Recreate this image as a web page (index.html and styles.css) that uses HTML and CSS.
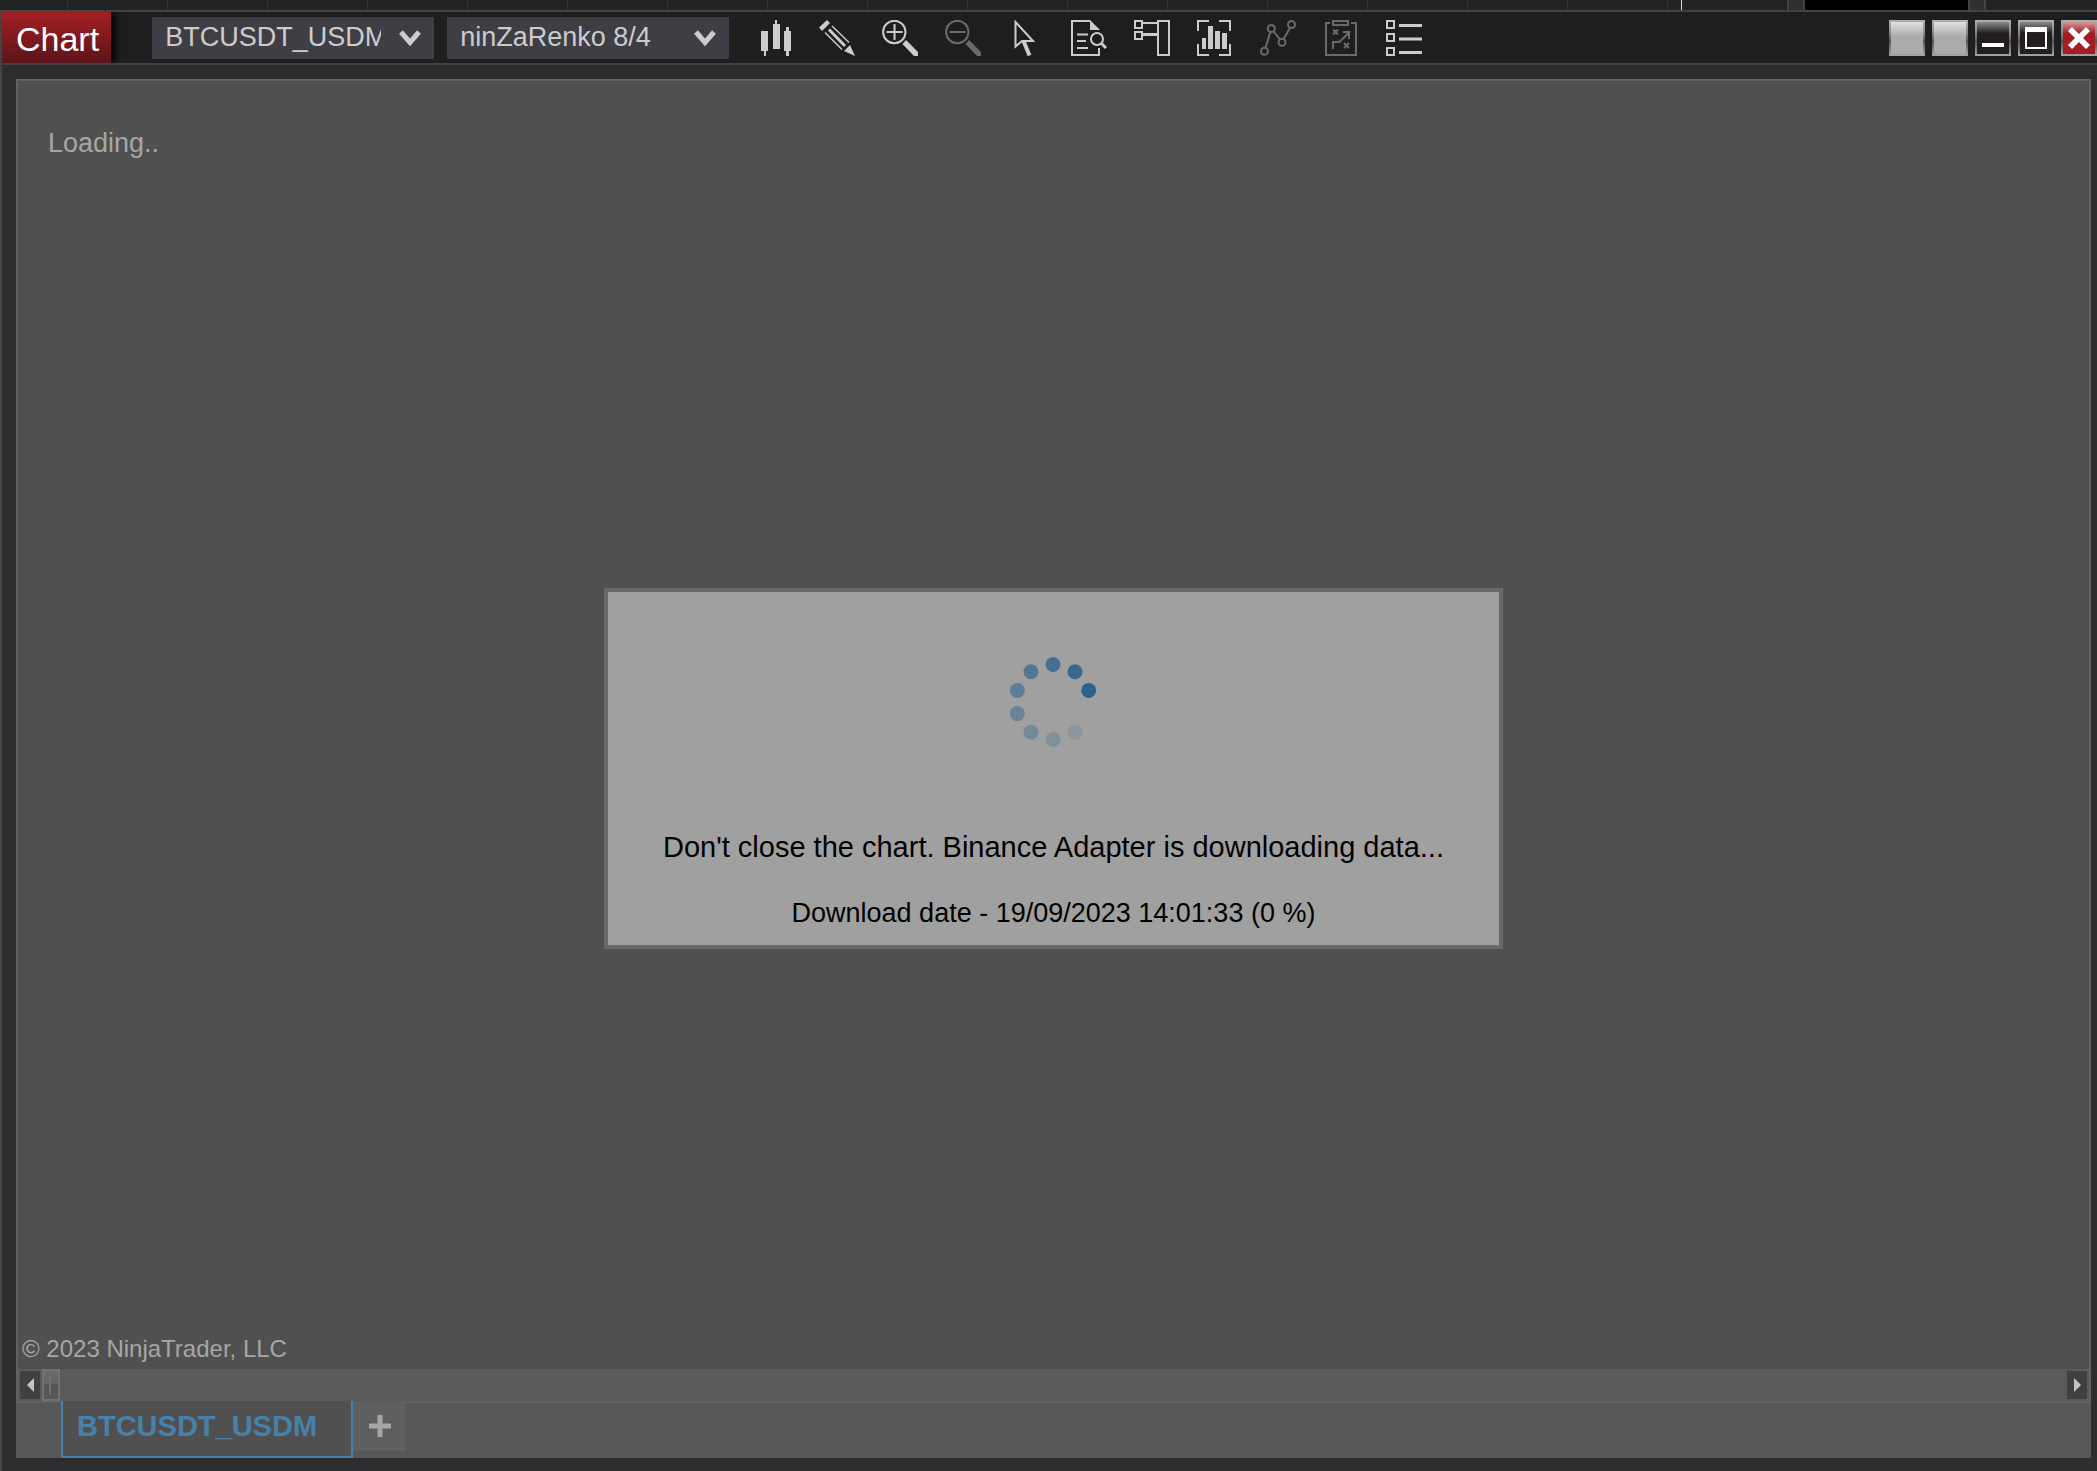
FILE: index.html
```html
<!DOCTYPE html>
<html lang="en">
<head>
    <meta charset="UTF-8">
    <meta name="viewport" content="width=device-width, initial-scale=1.0">
    <title>Chart</title>
    <link rel="stylesheet" href="styles.css">
</head>
<body>
    <!-- windows behind the chart -->
    <div class="backdrop">
        <div class="backdrop-grid"></div>
        <div class="backdrop-price"></div>
        <div class="backdrop-split"></div>
        <div class="backdrop-black"></div>
        <div class="backdrop-split"></div>
        <div class="backdrop-end"></div>
    </div>

    <div class="window">
        <header class="titlebar">
            <h1 class="title">Chart</h1>
            <div class="selects">
                <div class="select-box">
                    <select aria-label="Instrument">
                        <option>BTCUSDT_USDM</option>
                    </select>
                    <svg class="chevron" viewBox="0 0 22 16"><path d="M2 2l9 10.500l9-10.500" /></svg>
                </div>
                <div class="select-box">
                    <select aria-label="Interval">
                        <option>ninZaRenko 8/4</option>
                    </select>
                    <svg class="chevron" viewBox="0 0 22 16"><path d="M2 2l9 10.500l9-10.500" /></svg>
                </div>
            </div>
            <nav class="toolbar">
                <button type="button" class="tool" aria-label="Chart style">
                    <svg viewBox="0 0 36 36"><path class="fill" d="M5 11h7v20h-2v5h-2v-5h-3zM17 4h2v-4h2v4h3v25h-7zM28 11h2v-4h3v4h2v20h-2v5h-3v-5h-2z" /></svg>
                </button>
                <button type="button" class="tool" aria-label="Drawing tools">
                    <svg viewBox="0 0 36 36"><path class="fill" d="M0 7.500L8 0l3 3L3 11zM25 31l6-6l5 11z" /><path stroke-width="3" d="M10 9.500L26 26" /><path stroke-width="1.500" d="M13 6L30 22.500M6 12.500L23 29.500" /></svg>
                </button>
                <button type="button" class="tool" aria-label="Zoom in">
                    <svg viewBox="0 0 36 36"><circle cx="12.300" cy="12" r="11.200" /><path d="M4.500 12h16M12.500 4v16" /><path class="fill" d="M24 20l12 12v4h-4L20.500 24z" /></svg>
                </button>
                <button type="button" class="tool" aria-label="Zoom out" disabled>
                    <svg viewBox="0 0 36 36"><circle cx="12.300" cy="12" r="11.200" /><path d="M4.500 12h16" /><path class="fill" d="M24 20l12 12v4h-4L20.500 24z" /></svg>
                </button>
                <button type="button" class="tool" aria-label="Cursor">
                    <svg viewBox="0 0 36 36"><path d="M7.500 2v24.500l6.500-5.500h11z" /><path stroke-width="4" d="M15.500 21l6 14.500" /></svg>
                </button>
                <button type="button" class="tool" aria-label="Data box">
                    <svg viewBox="0 0 36 36"><path d="M19 1H1v34h27v-7M6 14.500h11M6 21h9M6 28h11" /><path class="fill" d="M19 0l10 10H19z" /><circle cx="26" cy="19" r="6" /><path stroke-width="3" d="M30.500 23.500l4.500 4.500" /></svg>
                </button>
                <button type="button" class="tool" aria-label="Chart trader">
                    <svg viewBox="0 0 36 36"><path d="M1 1h7v7H1zM1 12h7v7H1zM9 3h14M24 1h11v34H24z" /><path stroke-width="3" d="M9 14.500h14" /></svg>
                </button>
                <button type="button" class="tool" aria-label="Data series">
                    <svg viewBox="0 0 36 36"><path d="M12 1H1v10M22 1h11v10M12 35H1V24M22 35h11V24" /><path class="fill" d="M5 18h4v11H5zM11 6h5v23h-5zM18 11h5v18h-5zM25 13h5v16h-5z" /></svg>
                </button>
                <button type="button" class="tool" aria-label="Indicators" disabled>
                    <svg viewBox="0 0 36 36"><circle cx="4.500" cy="31.300" r="3.500" /><circle cx="11.300" cy="8.500" r="3.500" /><circle cx="22" cy="22.300" r="3.500" /><circle cx="31.500" cy="4.500" r="3.500" /><path d="M5.500 28L10.300 12M13.500 11.300L20 19.500M23.700 19L30 7.700" /></svg>
                </button>
                <button type="button" class="tool" aria-label="Strategies" disabled>
                    <svg viewBox="0 0 36 36"><path d="M7 3H3v32h30V3h-5M10 1h15v4H10zM10 29v-7h6.500L26 12.500M20 12h6v7M10 9.500l5 5M15 9.500l-5 5M21 23l5 5M26 23l-5 5" /></svg>
                </button>
                <button type="button" class="tool" aria-label="Properties">
                    <svg viewBox="0 0 36 36"><path d="M1 1h7v7H1zM1 14h7v7H1zM1 28h7v7H1z" /><path stroke-width="3" d="M13 5.500h23M13 19h23M13 32.500h23" /></svg>
                </button>
            </nav>
            <div class="window-buttons">
                <button type="button" class="win-btn light" aria-label="Link instrument"></button>
                <button type="button" class="win-btn light" aria-label="Link interval"></button>
                <button type="button" class="win-btn dark" aria-label="Minimize">
                    <svg viewBox="0 0 32 32"><path d="M5 21h22v4H5z" /></svg>
                </button>
                <button type="button" class="win-btn dark" aria-label="Maximize">
                    <svg viewBox="0 0 32 32"><path fill-rule="evenodd" d="M5 5h22v22H5zM7 10v15h18V10z" /></svg>
                </button>
                <button type="button" class="win-btn close" aria-label="Close">
                    <svg viewBox="0 0 32 32"><path d="M9 5l7 7l7-7l4 4l-7 7l7 7l-4 4l-7-7l-7 7l-4-4l7-7l-7-7z" /></svg>
                </button>
            </div>
        </header>

        <main class="panel">
            <section class="canvas">
                <p class="loading">Loading..</p>
                <p class="copyright">© 2023 NinjaTrader, LLC</p>
            </section>
            <div class="scrollbar">
                <button type="button" class="scroll-btn" aria-label="Scroll left">
                    <svg viewBox="0 0 20 28"><path d="M14 7v14L7 14z" /></svg>
                </button>
                <div class="scroll-thumb"></div>
                <button type="button" class="scroll-btn last" aria-label="Scroll right">
                    <svg viewBox="0 0 20 28"><path d="M7 7v14l7-7z" /></svg>
                </button>
            </div>
            <footer class="tabs">
                <a href="#" class="tab">BTCUSDT_USDM</a>
                <button type="button" class="add-tab" aria-label="Add tab">
                    <svg viewBox="0 0 24 24"><path d="M12 1v22M1 12h22" /></svg>
                </button>
            </footer>

            <div class="overlay">
                <div class="dialog" role="dialog" aria-label="Download progress">
                    <svg class="spinner" viewBox="0 0 90 90">
                        <circle cx="80.700" cy="33.400" r="7.500" fill="#2c628c" />
                        <circle cx="67" cy="14.700" r="7.500" fill="#39698f" />
                        <circle cx="45" cy="7.500" r="7.500" fill="#467093" />
                        <circle cx="23" cy="14.700" r="7.500" fill="#527794" />
                        <circle cx="9.300" cy="33.400" r="7.500" fill="#5f7d97" />
                        <circle cx="9.300" cy="56.600" r="7.500" fill="#698398" />
                        <circle cx="23" cy="75.300" r="7.500" fill="#738a99" />
                        <circle cx="45" cy="82.500" r="7.500" fill="#80909b" />
                        <circle cx="67" cy="75.300" r="7.500" fill="#8b969d" />
                    </svg>
                    <p class="message">Don't close the chart. Binance Adapter is downloading data...</p>
                    <p class="progress">Download date - 19/09/2023 14:01:33 (0 %)</p>
                </div>
            </div>
        </main>
    </div>
</body>
</html>
```
FILE: styles.css
```css
* {
    box-sizing: border-box;
}
body {
    margin: 0;
    min-height: 100vh;
    display: flex;
    flex-direction: column;
    font-family: "Liberation Sans", Arial, sans-serif;
    font-size: 27px;
    line-height: 32px;
    background: #2d2d30;
}
h1, p {
    margin: 0;
}
button {
    padding: 0;
    border: none;
    cursor: pointer;
}
svg {
    display: block;
}

/* backdrop */
.backdrop {
    display: flex;
    height: 10px;
    background: #222;
}
.backdrop-grid {
    flex: 1;
    background: repeating-linear-gradient(to right, transparent 0 67px, #333 67px 68px, transparent 68px 100px);
}
.backdrop-price {
    width: 106px;
    border-left: 1px solid #ddd;
}
.backdrop-split {
    width: 18px;
    background: #303033;
    border: solid #434346;
    border-width: 0 2px;
}
.backdrop-black {
    width: 163px;
    background: #000;
}
.backdrop-end {
    width: 111px;
}

/* window */
.window {
    flex: 1;
    display: flex;
    flex-direction: column;
    border: solid #434346;
    border-width: 2px 0 0 2px;
}
.titlebar {
    display: flex;
    align-items: center;
    height: 53px;
    background: #1e1e1e;
    border-bottom: 2px solid #434346;
}
.title {
    padding: 7px 12px 4px 14px;
    font-size: 34px;
    line-height: 40px;
    font-weight: normal;
    color: #fff;
    background: linear-gradient(#a31e22, #5c151a);
    box-shadow: 4px 0 8px #000;
    clip-path: inset(0 -16px 0 0);
}
.selects {
    display: flex;
    gap: 13px;
    margin: 0 27px 0 41px;
}
.select-box {
    position: relative;
}
.select-box select {
    display: block;
    appearance: none;
    width: 282px;
    height: 42px;
    padding: 0 53px 2px 13px;
    border: none;
    border-radius: 0;
    font: inherit;
    color: #ccc;
    background: #3f3e44;
}
.chevron {
    position: absolute;
    right: 13px;
    top: 13px;
    width: 22px;
    height: 16px;
    fill: none;
    stroke: #ccc;
    stroke-width: 5px;
    pointer-events: none;
}
.toolbar {
    display: flex;
    gap: 27px;
}
.tool {
    width: 36px;
    height: 36px;
    background: none;
    color: #ccc;
}
.tool:disabled {
    color: #6a6a6a;
    cursor: default;
}
.tool svg {
    fill: none;
    stroke: currentColor;
    stroke-width: 2;
}
.tool .fill {
    fill: currentColor;
    stroke: none;
}
.window-buttons {
    display: flex;
    gap: 7px;
    margin-left: auto;
    padding-top: 1px;
}
.win-btn {
    width: 36px;
    height: 36px;
    border: 2px solid transparent;
}
.win-btn svg {
    fill: #fff;
}
.light {
    background:
        linear-gradient(#e2e2e2, #adaaab 45%) padding-box,
        linear-gradient(#b0b0b3, #8a8a8d 35%, #555 60%, #a5a5a8) border-box;
}
.dark {
    background:
        linear-gradient(#8a8a8c, #231f20 35%) padding-box,
        linear-gradient(#b0b0b3, #8a8a8d 35%, #555 60%, #a5a5a8) border-box;
}
.close {
    background:
        linear-gradient(#d69a9c, #a31e22 35%) padding-box,
        linear-gradient(#b0b0b3, #8a8a8d 35%, #555 60%, #a5a5a8) border-box;
}

/* chart panel */
.panel {
    position: relative;
    flex: 1;
    display: flex;
    flex-direction: column;
    margin: 14px 6px 13px 14px;
    background: #575757;
}
.canvas {
    flex: 1;
    display: flex;
    flex-direction: column;
    justify-content: space-between;
    padding: 46px 4px 4px;
    background: #505050;
    border: solid #616161;
    border-width: 2px 2px 0;
    color: #a6a6a6;
}
.loading {
    padding-left: 26px;
}
.copyright {
    font-size: 24px;
}
.scrollbar {
    display: flex;
    align-items: center;
    gap: 2px;
    height: 32px;
    padding: 0 2px;
    background: #5a5a5a;
    border: solid #616161;
    border-width: 0 2px;
}
.scroll-btn {
    width: 20px;
    height: 28px;
    background: #404040;
}
.scroll-btn svg {
    fill: #c4c4c4;
}
.scroll-btn.last {
    margin-left: auto;
}
.scroll-thumb {
    width: 18px;
    height: 32px;
    border: 2px solid #727272;
    background:
        linear-gradient(#727272, #727272) 5px 5px / 2px 18px no-repeat,
        linear-gradient(#6c6c6c, #646464 45%, #545454 50%, #585858);
}
.tabs {
    display: flex;
    align-items: flex-start;
    height: 57px;
    padding-left: 45px;
    border-top: 2px solid #616161;
}
.tab {
    height: 57px;
    margin-top: -2px;
    padding: 9px 34px 0 14px;
    border: solid #4780a8;
    border-width: 0 2px 2px;
    font-size: 29px;
    font-weight: bold;
    color: #4780a8;
    background: #505050;
    text-decoration: none;
}
.add-tab {
    width: 53px;
    height: 50px;
    margin-top: -2px;
    background: #5f5f62;
}
.add-tab svg {
    width: 24px;
    height: 24px;
    margin: 0 auto;
    stroke: #a6a6a6;
    stroke-width: 5px;
}

/* download dialog */
.overlay {
    position: absolute;
    inset: 0;
    display: flex;
    align-items: center;
    justify-content: center;
}
.dialog {
    display: flex;
    flex-direction: column;
    align-items: center;
    padding: 65px 55px 16px;
    border: 4px solid #696969;
    background: #a0a0a0;
    color: #000;
}
.spinner {
    width: 90px;
    height: 90px;
    margin-bottom: 84px;
}
.message {
    margin-bottom: 34px;
    font-size: 29px;
}
```
